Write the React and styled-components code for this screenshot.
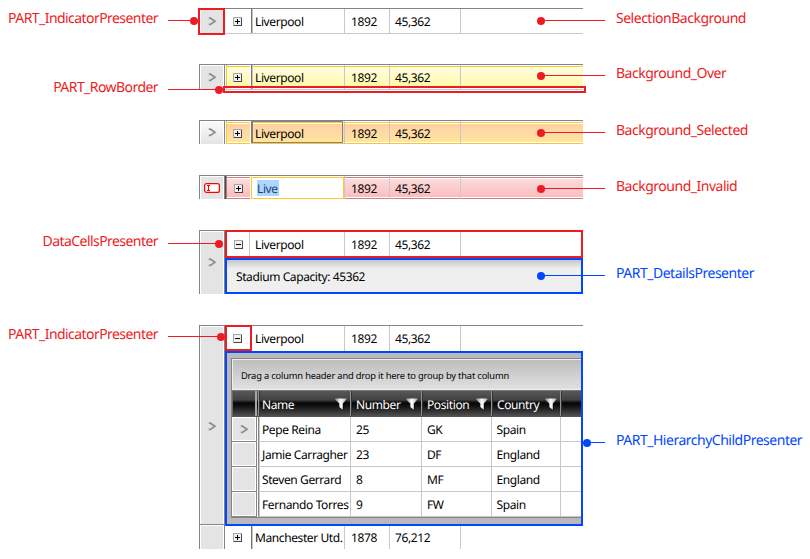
import React from "react";
import styled, { createGlobalStyle, css } from "styled-components";

const RED = "#ed1c24";
const BLUE = "#0048ff";
const EDGE = "#848484";
const LINE = "#c8c8c8";

const GlobalStyle = createGlobalStyle`
  body {
    margin: 0;
    background: #fff;
    overflow: hidden;
    font-family: "Noto Sans", "Open Sans", sans-serif;
    font-size: 12px;
    letter-spacing: -0.4px;
    color: #000;
    text-rendering: geometricPrecision;
  }
  *, *::before, *::after { box-sizing: border-box; }
`;

const Page = styled.main`
  display: grid;
  grid-template-columns: 199px 384px 1fr;
  width: 810px;
  height: 559px;
`;

/* ---------- callouts ---------- */

const Notes = styled.aside`
  display: flex;
  flex-direction: column;
  align-items: ${(p) => (p.$side === "left" ? "flex-end" : "flex-start")};
  padding: ${(p) => (p.$side === "left" ? "9px 41px 0 0" : "9px 0 0 33px")};
`;

const Note = styled.div`
  position: relative;
  z-index: 5;
  height: 20px;
  line-height: 20px;
  margin-top: ${(p) => p.$gap || 0}px;
  font-size: 14px;
  letter-spacing: ${(p) => (p.$side === "left" ? -0.56 : -0.49)}px;
  white-space: nowrap;
  color: ${(p) => p.$color};
`;

const Leader = styled.i`
  position: absolute;
  top: ${(p) => p.$y}px;
  ${(p) =>
    p.$side === "left"
      ? css`left: calc(100% + 10px);`
      : css`right: calc(100% + 11px);`}
  width: ${(p) => p.$length}px;
  height: 1px;
  background: currentColor;

  &::after {
    content: "";
    position: absolute;
    top: -3.5px;
    ${(p) => (p.$side === "left" ? "right: -4px;" : "left: -4px;")}
    width: 8px;
    height: 8px;
    border-radius: 50%;
    background: currentColor;
  }
`;

/* A right-hand leader is measured from the label's left edge, so it sits in a zero-width anchor. */
const Anchor = styled.span`
  position: absolute;
  top: 0;
  ${(p) => (p.$side === "left" ? "right: 0;" : "left: 0;")}
  width: 0;
`;

function Callout({ side, gap, y = 11, length, color = RED, children }) {
  return (
    <Note $side={side} $gap={gap} $color={color}>
      {children}
      <Anchor $side={side}>
        <Leader $side={side} $y={y} $length={length} />
      </Anchor>
    </Note>
  );
}

/* ---------- grid pieces ---------- */

const Figures = styled.section`
  display: flex;
  flex-direction: column;
  padding-top: 8px;
`;

const GridRow = styled.div`
  position: relative;
  display: grid;
  grid-template-columns: 26px 358px;
  height: ${(p) => p.$h}px;
  margin-top: ${(p) => p.$gap || 0}px;
`;

const Indicator = styled.div`
  display: flex;
  align-items: center;
  justify-content: center;
  border: 1px solid ${EDGE};
  border-bottom: 0;
  box-shadow: inset 1px 1px #fff, inset -1px 0 #fff;
  background: ${(p) => (p.$fade ? "linear-gradient(#fbfbfb, #e4e4e4)" : "#e4e4e4")};
`;

const rowSkins = {
  plain: "#fff",
  over: "linear-gradient(#fff 1px, #ffc92b 1px 2px, #fffde4 2px, #fff9a8 21px, #fff 21px)",
  selected:
    "linear-gradient(#fff 1px, #ffc92b 1px 2px, #fff 2px 3px, #ffcfa3 3px, #ffe5a0 21px, #fff 21px 22px, #f9c530 22px)",
  invalid:
    "linear-gradient(#fff 1px, #c98083 1px 2px, #fff 2px 3px, #fcdcdc 3px, #fbbcbd 21px, #fff 21px 22px, #c98083 22px)",
};

const Cells = styled.div`
  display: grid;
  grid-template-columns: 26px 93px 45px 71px 1fr;
  height: ${(p) => p.$h}px;
  border-top: 1px solid ${EDGE};
  border-bottom: ${(p) => (p.$ruled ? `1px solid ${LINE}` : "0")};
  background: ${(p) => rowSkins[p.$skin || "plain"]};
`;

const Cell = styled.div`
  display: flex;
  align-items: center;
  padding-left: 6px;
  padding-top: ${(p) => p.$drop || 0}px;
  border-left: 1px solid ${LINE};
  white-space: nowrap;
`;

const SeatsCell = styled(Cell)`
  padding-left: 5px;
`;

const NameCell = styled(Cell)`
  padding-left: 3px;
  border-left-color: ${(p) => (p.$light ? "#fff" : "#777")};
  box-shadow: ${(p) => (p.$light ? "none" : "inset 1px 0 #c4c4c4")};
  ${(p) =>
    p.$current &&
    css`
      box-shadow: inset 0 0 0 1px #858585;
      margin-right: 1px;
      margin-bottom: 1px;
    `}
`;

const expanderEdges = {
  over: css`
    box-shadow: inset 1px 0 #fff, inset 2px 0 #ffc92b;
    border-right: 1px solid #fff;
  `,
  selected: css`
    box-shadow: inset 1px 0 #fff, inset 2px 0 #f9c530;
    border-right: 1px solid #fff;
  `,
  invalid: css`
    box-shadow: inset 1px 0 #4e4e4e, inset 2px 0 #b57678;
    border-right: 1px solid #fff;
    padding-left: 9px;
  `,
  divided: css`
    border-right: 1px solid ${LINE};
    margin-right: 1px;
    padding-left: 9px;
  `,
};

const ExpanderCell = styled.div`
  display: flex;
  align-items: center;
  padding-left: 8px;
  padding-top: ${(p) => p.$drop || 0}px;
  ${(p) => expanderEdges[p.$edge]}
`;

const Editor = styled.div`
  display: flex;
  align-items: center;
  margin: 1px 0 0;
  padding-left: 5px;
  border: 1px solid #ffc92b;
  background: #fff;
`;

const Selection = styled.span`
  height: 16px;
  line-height: 17px;
  padding-right: 1px;
  background: #add6ff;
  color: #22426f;
`;

const Outline = styled.div`
  position: absolute;
  z-index: 3;
  left: ${(p) => p.$x}px;
  top: ${(p) => p.$y}px;
  width: ${(p) => p.$w}px;
  height: ${(p) => p.$h}px;
  border: 2px solid ${(p) => p.$color || RED};
`;

const Column = styled.div`
  display: flex;
  flex-direction: column;
  min-width: 0;
`;

const Details = styled.div`
  height: 36px;
  padding: 2px 0 0 11px;
  line-height: 34px;
  letter-spacing: -0.4px;
  background: linear-gradient(#c6c6c6 2px, #dedede 7px, #efefef 11px);
`;

/* ---------- child grid ---------- */

const ChildArea = styled.div`
  height: 175px;
  padding: 7px 2px 0 6px;
  background: #b9b9b9;
`;

const ChildGrid = styled.div`
  border: 1px solid ${EDGE};
  border-right: 0;
  background: #fff;
`;

const GroupPanel = styled.div`
  height: 31px;
  padding-left: 8px;
  border: 1px solid #e9f1f5;
  border-right: 0;
  line-height: 31px;
  font-size: 9.3px;
  letter-spacing: -0.17px;
  white-space: nowrap;
  background: linear-gradient(#bdbdbd, #e0e0e0);
`;

const childColumns = "25px 1px 92px 71px 70px 69px 1fr";

const HeadRow = styled.div`
  display: grid;
  grid-template-columns: ${childColumns};
  height: 27px;
  color: #fff;
  border-top: 1px solid #777;
  border-bottom: 1px solid #555;
  background: linear-gradient(#585858, #424242 9px, #292929 10px, #050505 12px, #111 15px, #505050 25px);
`;

const HeadCell = styled.div`
  display: flex;
  align-items: center;
  justify-content: space-between;
  padding: 1px 3px 0 5px;
  border-left: 1px solid #929292;
  box-shadow: inset 1px 0 #333;
  &:nth-child(3) { padding-left: 3px; padding-right: 3px; }
`;

const HeadCorner = styled.div`
  border-right: 2px solid #a5a5a5;
  box-shadow: inset 1px 0 #666;
`;

const ChildRow = styled.div`
  display: grid;
  grid-template-columns: ${childColumns};
  height: 25px;
`;

const ChildIndicator = styled(Indicator)`
  border: 0;
  border-right: 1px solid ${EDGE};
  border-bottom: 1px solid ${EDGE};
  box-shadow: inset 1px 1px #fff, inset -1px -1px #fff;
`;

const ChildCell = styled.div`
  display: flex;
  align-items: center;
  padding: 1px 0 0 5px;
  border-left: 1px solid ${LINE};
  border-bottom: 1px solid ${LINE};
  white-space: nowrap;
  &:nth-child(3) {
    padding-left: 3px;
    border-left-color: ${EDGE};
    box-shadow: inset 1px 0 ${LINE};
  }
  &:nth-child(6) { padding-left: 4.5px; }
`;

/* ---------- icons ---------- */

const Icon = styled.svg`
  flex: none;
  display: block;
`;

const Chevron = () => (
  <Icon width="9" height="9" viewBox="0 0 9 9">
    <path d="M.8 1.2h1.6L7 4.3 2.4 7.4H.8" fill="none" stroke="#8e8e8e" strokeWidth="1.7" />
  </Icon>
);

const Toggle = ({ open }) => (
  <Icon width="9" height="9" viewBox="0 0 9 9" shapeRendering="crispEdges">
    <rect x=".5" y=".5" width="8" height="8" fill="#f0f0f0" stroke="#a6a6a6" />
    <path d="M8.5 1v7.5H1" fill="none" stroke="#484848" />
    <path d={open ? "M2 4.5h5" : "M2 4.5h5M4.5 2v5"} stroke="#000" />
  </Icon>
);

const EditMark = () => (
  <Icon width="16" height="10" viewBox="0 0 16 10">
    <rect x=".6" y=".6" width="14.8" height="8.8" rx="2" fill="#fff" stroke="#f00" strokeWidth="1.2" />
    <path d="M3 2.5h3M4.5 2.5v5M3 7.5h3" stroke="#f00" />
  </Icon>
);

const Funnel = () => (
  <Icon width="12" height="13" viewBox="0 0 12 13">
    <defs>
      <linearGradient id="funnel" x1="0" x2="1">
        <stop offset="0" stopColor="#8a8a8a" />
        <stop offset=".5" stopColor="#fff" />
        <stop offset="1" stopColor="#a8a8a8" />
      </linearGradient>
    </defs>
    <path d="M.5 2h11.3L8.6 6v6.6L4.6 9V6z" fill="#090909" />
    <path d="M.3 .5h11v1.2L7.8 5.6v6.2L4.3 9V5.6L.3 1.7z" fill="url(#funnel)" />
  </Icon>
);

function DataCells({ h, skin, ruled, open, edge, drop = 0, name = "Liverpool", year = "1892", seats = "45,362", editing, current, light }) {
  return (
    <Cells $h={h} $skin={skin} $ruled={ruled}>
      <ExpanderCell $edge={edge || skin} $drop={drop}>
        <Toggle open={open} />
      </ExpanderCell>
      {editing ? (
        <Editor><Selection>Live</Selection></Editor>
      ) : (
        <NameCell $current={current} $light={light} $drop={drop}>{name}</NameCell>
      )}
      <Cell $drop={drop}>{year}</Cell>
      <SeatsCell $drop={drop}>{seats}</SeatsCell>
      <Cell />
    </Cells>
  );
}

const players = [
  ["Pepe Reina", "25", "GK", "Spain"],
  ["Jamie Carragher", "23", "DF", "England"],
  ["Steven Gerrard", "8", "MF", "England"],
  ["Fernando Torres", "9", "FW", "Spain"],
];

function PlayersGrid() {
  return (
    <ChildGrid>
      <GroupPanel>Drag a column header and drop it here to group by that column</GroupPanel>
      <HeadRow>
        <HeadCorner />
        <span />
        {["Name", "Number", "Position", "Country"].map((title) => (
          <HeadCell key={title}>{title}<Funnel /></HeadCell>
        ))}
        <HeadCell />
      </HeadRow>
      {players.map((player, index) => (
        <ChildRow key={player[0]}>
          <ChildIndicator>{index === 0 && <Chevron />}</ChildIndicator>
          <span />
          {player.map((value) => <ChildCell key={value}>{value}</ChildCell>)}
          <ChildCell />
        </ChildRow>
      ))}
    </ChildGrid>
  );
}

export default function App() {
  return (
    <Page>
      <GlobalStyle />
      <Notes $side="left">
        <Callout side="left" length={26}>PART_IndicatorPresenter</Callout>
        <Callout side="left" gap={49} length={51}>PART_RowBorder</Callout>
        <Callout side="left" gap={134} length={51}>DataCellsPresenter</Callout>
        <Callout side="left" gap={73} length={53}>PART_IndicatorPresenter</Callout>
      </Notes>

      <Figures>
        <GridRow $h={26}>
          <Indicator><Chevron /></Indicator>
          <DataCells h={26} ruled />
          <Outline $x={-1} $y={0} $w={27} $h={27} />
        </GridRow>

        <GridRow $h={26} $gap={30}>
          <Indicator><Chevron /></Indicator>
          <DataCells h={26} skin="over" ruled />
          <Outline $x={24} $y={22} $w={363} $h={7} />
        </GridRow>

        <GridRow $h={24} $gap={30}>
          <Indicator $fade><Chevron /></Indicator>
          <DataCells h={24} skin="selected" drop={2} current />
        </GridRow>

        <GridRow $h={24} $gap={31}>
          <Indicator><EditMark /></Indicator>
          <DataCells h={24} skin="invalid" drop={2} editing />
        </GridRow>

        <GridRow $h={64} $gap={31}>
          <Indicator><Chevron /></Indicator>
          <Column>
            <DataCells h={28} edge="divided" open light />
            <Details>Stadium Capacity: 45362</Details>
          </Column>
          <Outline $x={26} $y={0} $w={358} $h={28} />
          <Outline $x={26} $y={28} $w={358} $h={36} $color={BLUE} />
        </GridRow>

        <GridRow $h={199} $gap={31}>
          <Indicator><Chevron /></Indicator>
          <Column>
            <DataCells h={26} open light />
            <ChildArea><PlayersGrid /></ChildArea>
          </Column>
          <Outline $x={26} $y={26} $w={358} $h={175} $color={BLUE} />
          <Outline $x={26} $y={0} $w={27} $h={26} />
        </GridRow>

        <GridRow $h={25}>
          <Indicator />
          <DataCells h={25} name="Manchester Utd." year="1878" seats="76,212" />
        </GridRow>
      </Figures>

      <Notes $side="right">
        <Callout side="right" length={64}>SelectionBackground</Callout>
        <Callout side="right" gap={35} length={64}>Background_Over</Callout>
        <Callout side="right" gap={37} length={64}>Background_Selected</Callout>
        <Callout side="right" gap={36} length={64}>Background_Invalid</Callout>
        <Callout side="right" gap={67} length={64} color={BLUE}>PART_DetailsPresenter</Callout>
        <Callout side="right" gap={147} length={18} color={BLUE}>PART_HierarchyChildPresenter</Callout>
      </Notes>
    </Page>
  );
}
